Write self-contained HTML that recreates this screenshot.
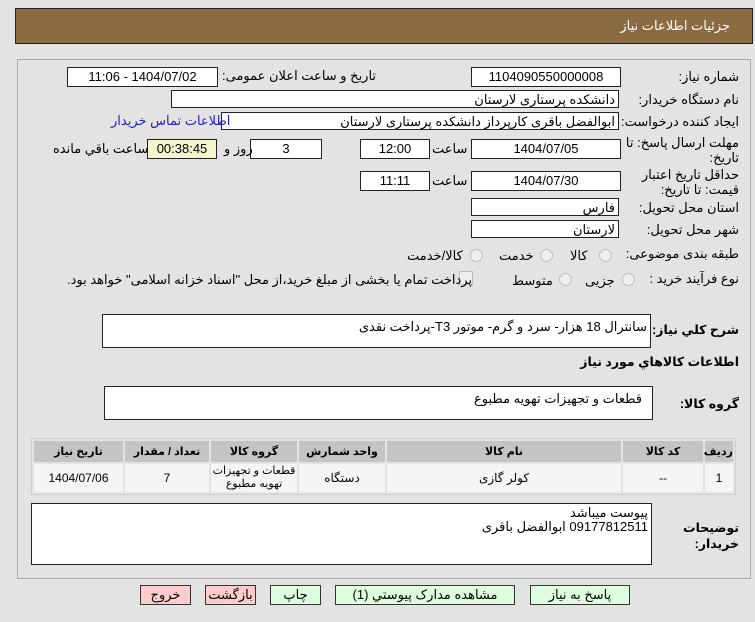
<!DOCTYPE html>
<html><head><meta charset="utf-8"><style>
body{margin:0;width:755px;height:622px;background:#e3e3e3;font-family:Tahoma,"Liberation Sans","DejaVu Sans",sans-serif;font-size:12px;color:#000;position:relative;overflow:hidden}
.a{position:absolute}
.hdr{left:15px;top:8px;width:736px;height:34px;background:#8b6b42;border:1px solid #222}
.hdr span{position:absolute;right:22px;top:9px;color:#fff;font-size:13px}
.panel{left:17px;top:59px;width:732px;height:518px;border:1px solid #aaa;background:#e3e3e3}
.in{position:absolute;background:#fff;border:1px solid #222;height:18px;line-height:18px;text-align:center;direction:rtl;font-size:13px}
.r{text-align:right;padding-right:3px;box-sizing:border-box}
.lb{position:absolute;direction:rtl;white-space:nowrap;font-size:13px}
.b{font-weight:bold;font-size:12.5px}
.rad{position:absolute;width:11px;height:11px;border-radius:50%;border:1px solid #bbb;background:#eee}
.ta{position:absolute;background:#fff;border:1px solid #222;direction:rtl;text-align:right;padding:4px 3px;box-sizing:border-box;font-size:13px}
table{position:absolute;left:31px;top:438px;width:705px;border-collapse:separate;border-spacing:2px;border:1px solid #ccc;direction:rtl;font-size:12px;table-layout:fixed}
th{background:#c4c4c4;height:21px;font-weight:bold;padding:0;font-size:11px;white-space:nowrap}
td{background:#f5f5f5;height:28px;text-align:center;line-height:13px;padding:0}
.btn{position:absolute;top:585px;height:18px;border:1px solid #333;text-align:center;line-height:18px;font-size:13px}
</style></head><body>
<div class="a hdr"><span>جزئیات اطلاعات نیاز</span></div>
<div class="a panel"></div>

<div class="lb" style="right:16px;top:69px">شماره نیاز:</div>
<div class="in" style="left:471px;top:67px;width:148px">1104090550000008</div>
<div class="lb" style="left:222px;top:68px">تاریخ و ساعت اعلان عمومی:</div>
<div class="in" style="left:67px;top:67px;width:149px">1404/07/02 - 11:06</div>

<div class="lb" style="right:16px;top:92px">نام دستگاه خریدار:</div>
<div class="in r" style="left:171px;top:90px;width:448px">دانشکده پرستاری لارستان</div>

<div class="lb" style="right:16px;top:114px">ایجاد کننده درخواست:</div>
<div class="in r" style="left:221px;top:112px;width:398px">ابوالفضل باقری کارپرداز دانشکده پرستاری لارستان</div>
<div class="lb" style="left:111px;top:113px;color:#22c">اطلاعات تماس خریدار</div>

<div class="lb" style="right:16px;top:135px;line-height:15px;text-align:right">مهلت ارسال پاسخ: تا<br>تاریخ:</div>
<div class="in" style="left:471px;top:139px;width:148px">1404/07/05</div>
<div class="lb" style="left:432px;top:141px">ساعت</div>
<div class="in" style="left:360px;top:139px;width:68px">12:00</div>
<div class="in" style="left:250px;top:139px;width:70px">3</div>
<div class="lb" style="left:224px;top:141px">روز و</div>
<div class="in" style="left:147px;top:139px;width:68px;background:#f5f5cc">00:38:45</div>
<div class="lb" style="left:53px;top:141px">ساعت باقي مانده</div>

<div class="lb" style="right:16px;top:167px;line-height:15px;text-align:right">حداقل تاریخ اعتبار<br>قیمت: تا تاریخ:</div>
<div class="in" style="left:471px;top:171px;width:148px">1404/07/30</div>
<div class="lb" style="left:432px;top:173px">ساعت</div>
<div class="in" style="left:360px;top:171px;width:68px">11:11</div>

<div class="lb" style="right:16px;top:200px">استان محل تحویل:</div>
<div class="in r" style="left:471px;top:198px;width:148px">فارس</div>
<div class="lb" style="right:16px;top:222px">شهر محل تحویل:</div>
<div class="in r" style="left:471px;top:220px;width:148px">لارستان</div>

<div class="lb" style="right:16px;top:246px">طبقه بندی موضوعی:</div>
<div class="rad" style="left:599px;top:249px"></div><div class="lb" style="left:570px;top:248px">کالا</div>
<div class="rad" style="left:540px;top:249px"></div><div class="lb" style="left:499px;top:248px">خدمت</div>
<div class="rad" style="left:470px;top:249px"></div><div class="lb" style="left:407px;top:248px">کالا/خدمت</div>

<div class="lb" style="right:16px;top:271px">نوع فرآیند خرید :</div>
<div class="rad" style="left:622px;top:273px"></div><div class="lb" style="left:585px;top:273px">جزیی</div>
<div class="rad" style="left:559px;top:273px"></div><div class="lb" style="left:512px;top:273px">متوسط</div>
<div class="a" style="left:459px;top:271px;width:12px;height:12px;border:1px solid #bbb;background:#eee"></div>
<div class="lb" style="left:67px;top:272px">پرداخت تمام یا بخشی از مبلغ خرید،از محل "اسناد خزانه اسلامی" خواهد بود.</div>

<div class="lb b" style="right:16px;top:322px">شرح كلي نياز:</div>
<div class="ta" style="left:102px;top:314px;width:549px;height:34px">سانترال 18 هزار- سرد و گرم- موتور T3-پرداخت نقدی</div>
<div class="lb b" style="right:16px;top:354px">اطلاعات كالاهاي مورد نياز</div>
<div class="lb b" style="right:16px;top:396px">گروه کالا:</div>
<div class="ta" style="left:104px;top:386px;width:549px;height:34px;padding-right:10px">قطعات و تجهیزات تهویه مطبوع</div>

<table>
<tr><th style="width:28px">ردیف</th><th style="width:80px">کد کالا</th><th style="width:234px">نام کالا</th><th style="width:86px">واحد شمارش</th><th style="width:86px">گروه کالا</th><th style="width:84px">تعداد / مقدار</th><th>تاریخ نیاز</th></tr>
<tr><td>1</td><td>--</td><td>کولر گازی</td><td>دستگاه</td><td style="font-size:11px">قطعات و تجهیزات<br>تهویه مطبوع</td><td>7</td><td>1404/07/06</td></tr>
</table>

<div class="lb b" style="right:16px;top:520px;line-height:16px;text-align:right">توضیحات<br>خریدار:</div>
<div class="ta" style="left:31px;top:503px;width:621px;height:62px;padding-top:2px;line-height:14px">پیوست میباشد<br>09177812511 ابوالفضل باقری</div>

<div class="btn" style="left:140px;width:49px;background:#fcc">خروج</div>
<div class="btn" style="left:205px;width:49px;background:#fcc">بازگشت</div>
<div class="btn" style="left:270px;width:49px;background:#dfd">چاپ</div>
<div class="btn" style="left:335px;width:178px;background:#dfd">مشاهده مدارک پیوستي (1)</div>
<div class="btn" style="left:530px;width:98px;background:#dfd">پاسخ به نیاز</div>
</body></html>
